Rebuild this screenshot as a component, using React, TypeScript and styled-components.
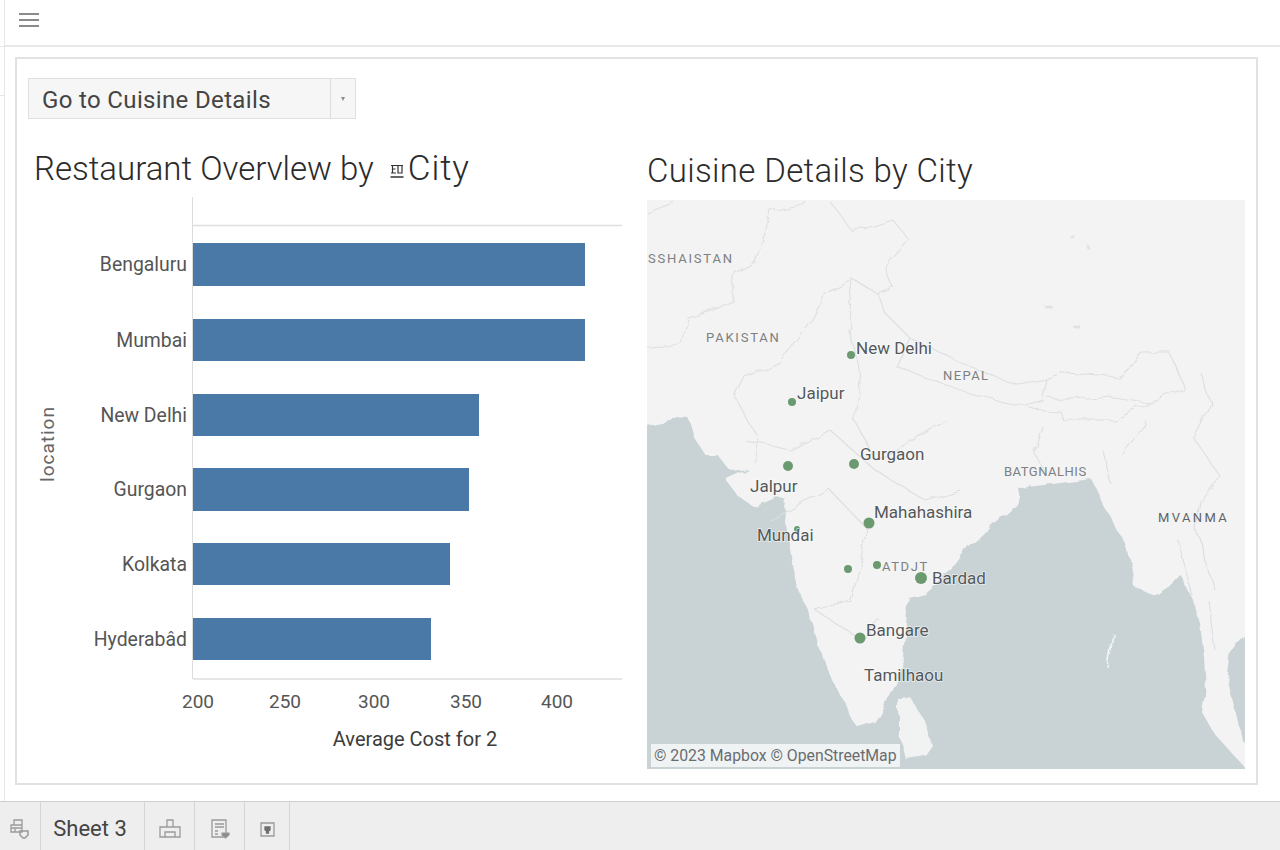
import React from 'react';
import styled, { createGlobalStyle } from 'styled-components';

const GlobalStyle = createGlobalStyle`
  html, body {
    margin: 0;
    padding: 0;
    background: #fff;
    font-family: Roboto, "Liberation Sans", sans-serif;
  }
`;

const Page = styled.div`
  width: 1280px;
  height: 850px;
  display: flex;
  flex-direction: column;
  overflow: hidden;
`;

const Workspace = styled.div`
  flex: 1;
  display: flex;
  min-height: 0;
`;

const Rail = styled.div`
  width: 4px;
  border-right: 1px solid #e6e6e6;
  display: flex;
  flex-direction: column;
`;

const RailCell = styled.div<{ $height: number }>`
  height: ${(p) => p.$height}px;
  border-bottom: 1px solid #e6e6e6;
`;

const Main = styled.div`
  flex: 1;
  display: flex;
  flex-direction: column;
`;

const TopBar = styled.div`
  height: 45px;
  border-bottom: 2px solid #e8e8e8;
  box-sizing: content-box;
  display: flex;
  align-items: center;
  padding-left: 14px;
`;

const Burger = styled.div`
  width: 20px;
  height: 14px;
  margin-bottom: 6px;
  display: flex;
  flex-direction: column;
  justify-content: space-between;

  span {
    height: 2px;
    background: #8a8a8a;
  }
`;

const Panel = styled.div`
  margin: 10px 22px 16px 10px;
  flex: 1;
  border: 2px solid #e2e2e2;
  padding: 19px 11px 14px;
  display: flex;
  flex-direction: column;
  min-height: 0;
`;

const Select = styled.div`
  width: 328px;
  height: 41px;
  box-sizing: border-box;
  border: 1px solid #e0e0e0;
  background: #f6f6f6;
  display: flex;
  flex-shrink: 0;
`;

const SelectLabel = styled.div`
  flex: 1;
  display: flex;
  align-items: center;
  padding: 2px 0 0 13px;
  font-size: 24px;
  letter-spacing: 0.35px;
  color: #444;
`;

const SelectArrow = styled.div`
  width: 24px;
  border-left: 1px solid #dcdcdc;
  display: flex;
  align-items: center;
  justify-content: center;

  &::after {
    content: '';
    border-left: 2.5px solid transparent;
    border-right: 2.5px solid transparent;
    border-top: 4px solid #8c8c8c;
  }
`;

const Columns = styled.div`
  flex: 1;
  display: grid;
  grid-template-columns: 619px 598px;
  min-height: 0;
`;

const Column = styled.div`
  display: flex;
  flex-direction: column;
  min-height: 0;
`;

const Title = styled.h2<{ $height: number; $indent: number; $top: number; $spacing: number }>`
  margin: 0;
  height: ${(p) => p.$height}px;
  padding-left: ${(p) => p.$indent}px;
  padding-top: ${(p) => p.$top}px;
  box-sizing: border-box;
  font-size: 33px;
  line-height: 44px;
  font-weight: 300;
  letter-spacing: ${(p) => p.$spacing}px;
  color: #2b2b2b;
  display: flex;
  align-items: flex-start;
  flex-shrink: 0;
  white-space: pre;
`;

const TitleCity = styled.span`
  font-size: 35px;
  letter-spacing: 0.9px;
`;

const TitleGlyph = styled.svg`
  width: 14px;
  height: 17px;
  margin: 15px 4px 0 16px;
`;

const ChartSvg = styled.svg`
  display: block;
  width: 619px;
  height: 574px;
  font-family: Roboto, "Liberation Sans", sans-serif;
`;

const CategoryLabel = styled.text`
  font-size: 19.4px;
  fill: #555;
  text-anchor: end;
`;

const TickLabel = styled.text`
  font-size: 19px;
  fill: #555;
  text-anchor: middle;
`;

const AxisTitle = styled.text<{ $dark?: boolean }>`
  font-size: ${(p) => (p.$dark ? 20 : 19)}px;
  letter-spacing: ${(p) => (p.$dark ? 0 : 1)}px;
  fill: ${(p) => (p.$dark ? '#3c3c3c' : '#666')};
  text-anchor: middle;
`;

const MapFrame = styled.div`
  position: relative;
  width: 598px;
  height: 569px;
  overflow: hidden;
`;

const MapSvg = styled.svg`
  display: block;
  width: 598px;
  height: 569px;
  font-family: Roboto, "Liberation Sans", sans-serif;
`;

const CityLabel = styled.text`
  font-size: 17px;
  fill: #54585a;
  paint-order: stroke;
  stroke: rgba(255, 255, 255, 0.65);
  stroke-width: 1.5px;
`;

const CountryLabel = styled.text<{ $spacing?: number; $fill?: string }>`
  font-size: 13px;
  fill: ${(p) => p.$fill ?? '#7c8082'};
  letter-spacing: ${(p) => p.$spacing ?? 1}px;
`;

const Attribution = styled.div`
  position: absolute;
  left: 4px;
  bottom: 2px;
  height: 23px;
  padding: 0 3px;
  display: flex;
  align-items: center;
  background: rgba(255, 255, 255, 0.72);
  font-size: 15.8px;
  color: #6a6d6f;
  white-space: nowrap;
`;

const Footer = styled.div`
  height: 49px;
  flex-shrink: 0;
  box-sizing: border-box;
  background: #eeeeee;
  border-top: 1px solid #cfcfcf;
  display: flex;
`;

const FooterCell = styled.div<{ $width: number }>`
  width: ${(p) => p.$width}px;
  box-sizing: border-box;
  border-right: 1px solid #d5d5d5;
  padding-top: 5px;
  display: flex;
  align-items: center;
  justify-content: center;
  font-size: 22px;
  color: #444;
`;

const SheetTab = styled(FooterCell)`
  padding-right: 5px;
`;

const FooterIcon = styled.svg`
  width: 24px;
  height: 24px;
  fill: none;
  stroke: #9a9a9a;
  stroke-width: 1.3;
`;

const bars = [
  { city: 'Bengaluru', top: 243, height: 43, end: 585 },
  { city: 'Mumbai', top: 319, height: 42, end: 585 },
  { city: 'New Delhi', top: 394, height: 42, end: 479 },
  { city: 'Gurgaon', top: 468, height: 43, end: 469 },
  { city: 'Kolkata', top: 543, height: 42, end: 450 },
  { city: 'Hyderabâd', top: 618, height: 42, end: 431 },
];

const ticks = [
  { label: '200', x: 198 },
  { label: '250', x: 285 },
  { label: '300', x: 374 },
  { label: '350', x: 466 },
  { label: '400', x: 557 },
];

// land outline runs past the map edge so the wobble filter never shows water at the frame
const LAND =
  'M635,185 H1260 V628 L1245,633 1229,651 1225,680 1235,720 1245,745 1260,752 V780 L1245,766 1215,733 1203,712 1207,690 1205,657 1201,623 1193,597 1181,573 1168,586 1154,595 1136,587 1132,565 1126,543 1106,507 1092,478 1060,482 1019,487 1015,503 988,527 968,547 952,570 925,593 909,597 906,613 901,667 889,693 873,720 857,725 842,697 822,653 810,613 798,587 792,560 786,523 788,500 778,497 755,507 740,497 727,480 755,467 731,470 717,453 705,453 695,437 689,416 647,425 635,427 Z';

const BORDERS = [
  'M647,213 L675,202',
  'M806,202 L770,210 766,230 755,262 735,273 731,300 711,310 687,317 681,345 647,347',
  'M826,293 L810,323 798,340 778,363 745,377 735,397 747,420 759,437 755,463',
  'M830,202 L853,232 893,220 909,240 885,267 893,287 877,293 853,280 826,293',
  'M877,293 L885,313 909,337 948,357 996,377 1019,385 1047,380 1043,397',
  'M909,337 L895,365 948,387 1019,407 1043,400',
  'M1047,397 L1075,400 1114,397 1150,403 1185,390 1170,353 1142,353 1118,377 1067,372 1047,380',
  'M1029,408 L1059,410 1063,420 1114,420 1150,403',
  'M1043,427 L1035,453 1043,470',
  'M1102,450 L1110,483 M1122,453 L1146,420',
  'M1201,373 L1211,403 1193,437 1221,477 1200,500 1196,530 1215,590',
  'M853,280 L848,330 860,370 855,420 875,460 945,420',
  'M745,440 L790,450 830,430 875,470 925,500 960,490',
  'M770,520 L830,490 868,530 850,600 815,610 862,640 880,620',
  'M1179,540 L1193,597 M1208,600 L1215,650',
];

const lakes = [
  { x: 1049, y: 307, rx: 4, ry: 1.5 },
  { x: 1076, y: 326, rx: 4, ry: 1.5 },
  { x: 1072, y: 236, rx: 3, ry: 1 },
  { x: 1087, y: 246, rx: 2, ry: 1.5 },
];

const pins = [
  { x: 851, y: 355, r: 4 },
  { x: 792, y: 402, r: 4 },
  { x: 788, y: 466, r: 5 },
  { x: 854, y: 464, r: 5 },
  { x: 797, y: 529, r: 3 },
  { x: 869, y: 523, r: 5.5 },
  { x: 848, y: 569, r: 4 },
  { x: 877, y: 565, r: 4 },
  { x: 921, y: 578, r: 6 },
  { x: 860, y: 638, r: 5.5 },
];

const cities = [
  { name: 'New Delhi', x: 856, y: 354 },
  { name: 'Jaipur', x: 797, y: 399 },
  { name: 'Gurgaon', x: 860, y: 460 },
  { name: 'Jalpur', x: 750, y: 492 },
  { name: 'Mahahashira', x: 874, y: 518 },
  { name: 'Mundai', x: 757, y: 541 },
  { name: 'Bardad', x: 932, y: 584 },
  { name: 'Bangare', x: 866, y: 636 },
  { name: 'Tamilhaou', x: 864, y: 681 },
];

const countries = [
  { name: 'SSHAISTAN', x: 648, y: 263, spacing: 1.8 },
  { name: 'PAKISTAN', x: 706, y: 342, spacing: 1.8 },
  { name: 'NEPAL', x: 943, y: 380, spacing: 1.4 },
  { name: 'BATGNALHIS', x: 1004, y: 476, spacing: 0.5 },
  { name: 'ATDJT', x: 882, y: 571, spacing: 1.6 },
  { name: 'MVANMA', x: 1158, y: 522, spacing: 2.4, fill: '#5f6365' },
];

export default function App() {
  return (
    <Page>
      <GlobalStyle />
      <Workspace>
        <Rail>
          <RailCell $height={46} />
          <RailCell $height={48} />
        </Rail>
        <Main>
          <TopBar>
            <Burger>
              <span />
              <span />
              <span />
            </Burger>
          </TopBar>
          <Panel>
            <Select>
              <SelectLabel>Go to Cuisine Details</SelectLabel>
              <SelectArrow />
            </Select>
            <Columns>
              <Column>
                <Title $height={76} $indent={6} $top={28} $spacing={0}>
                  Restaurant Overvlew by
                  <TitleGlyph viewBox="0 0 14 17" fill="none" stroke="#333">
                    <path d="M1 3.5h12M2.5 3.5v7.5M1 11h5M2.5 7h3M8 3.5v7.5h4V3.5" strokeWidth="1.2" />
                    <path d="M0.5 15h13" strokeWidth="1.5" />
                  </TitleGlyph>
                  <TitleCity>City</TitleCity>
                </Title>
                <ChartSvg viewBox="28 195 619 574">
                  <line x1="192.5" y1="197" x2="192.5" y2="679" stroke="#dcdcdc" />
                  <line x1="193" y1="225.5" x2="622" y2="225.5" stroke="#dedede" strokeWidth="1.5" />
                  <line x1="193" y1="679" x2="622" y2="679" stroke="#dedede" strokeWidth="1.5" />
                  {bars.map((bar) => (
                    <React.Fragment key={bar.city}>
                      <rect x="193" y={bar.top} width={bar.end - 193} height={bar.height} fill="#4a79a8" />
                      <CategoryLabel x="187" y={bar.top + bar.height / 2 + 6.5}>
                        {bar.city}
                      </CategoryLabel>
                    </React.Fragment>
                  ))}
                  {ticks.map((tick) => (
                    <TickLabel key={tick.label} x={tick.x} y="708">
                      {tick.label}
                    </TickLabel>
                  ))}
                  <AxisTitle $dark x="415" y="746">
                    Average Cost for 2
                  </AxisTitle>
                  <AxisTitle transform="translate(54 444) rotate(-90)">location</AxisTitle>
                </ChartSvg>
              </Column>
              <Column>
                <Title $height={81} $indent={0} $top={30} $spacing={0.35}>
                  Cuisine Details by City
                </Title>
                <MapFrame>
                  <MapSvg viewBox="647 200 598 569">
                    <defs>
                      <filter id="wobble" x="620" y="170" width="660" height="630" filterUnits="userSpaceOnUse">
                        <feTurbulence type="fractalNoise" baseFrequency="0.045" numOctaves="3" seed="7" />
                        <feDisplacementMap in="SourceGraphic" scale="9" />
                        <feGaussianBlur stdDeviation="0.5" />
                      </filter>
                    </defs>
                    <rect x="647" y="200" width="598" height="569" fill="#c9d3d6" />
                    <g filter="url(#wobble)">
                      <path d={LAND} fill="#f3f3f3" stroke="#f3f3f3" strokeLinejoin="round" strokeWidth="2" />
                      <path d="M899,700 L910,697 924,720 932,745 925,755 905,758 899,735 Z" fill="#f1f2f2" />
                      <path d="M1113,633 L1110,655 1108,668 1111,650 Z" fill="#f3f3f3" stroke="#f3f3f3" strokeWidth="1.5" />
                      {BORDERS.map((d) => (
                        <path key={d} d={d} fill="none" stroke="#dcdfe0" strokeWidth="1.1" strokeLinejoin="round" />
                      ))}
                      {lakes.map((lake) => (
                        <ellipse key={lake.x} cx={lake.x} cy={lake.y} rx={lake.rx} ry={lake.ry} fill="#dde2e3" />
                      ))}
                    </g>
                    {pins.map((pin) => (
                      <circle key={`${pin.x}-${pin.y}`} cx={pin.x} cy={pin.y} r={pin.r} fill="#6b9a70" />
                    ))}
                    {countries.map((c) => (
                      <CountryLabel key={c.name} x={c.x} y={c.y} $spacing={c.spacing} $fill={c.fill}>
                        {c.name}
                      </CountryLabel>
                    ))}
                    {cities.map((c) => (
                      <CityLabel key={c.name} x={c.x} y={c.y}>
                        {c.name}
                      </CityLabel>
                    ))}
                  </MapSvg>
                  <Attribution>© 2023 Mapbox © OpenStreetMap</Attribution>
                </MapFrame>
              </Column>
            </Columns>
          </Panel>
        </Main>
      </Workspace>
      <Footer>
        <FooterCell $width={41}>
          <FooterIcon viewBox="0 0 24 24">
            <path d="M6 3h8v5H6zM3 8h11v7H3zM3 11h11M7 15v-4" />
            <path d="M12 14h8v4l-3 3h-2l-3-3z" strokeWidth="1.5" />
          </FooterIcon>
        </FooterCell>
        <SheetTab $width={104}>Sheet 3</SheetTab>
        <FooterCell $width={50}>
          <FooterIcon viewBox="0 0 24 24">
            <path d="M9 3h6v7H9zM2 10h20v10H2zM7 15h10v5H7z" />
          </FooterIcon>
        </FooterCell>
        <FooterCell $width={50}>
          <FooterIcon viewBox="0 0 24 24">
            <path d="M4 3h14v17H4zM7 7h9M7 10h9M7 14h3M7 17h3" />
            <path d="M14 16h7v2l-3.500 3-3.500-3z" fill="#8a8a8a" strokeWidth="1.200" />
          </FooterIcon>
        </FooterCell>
        <FooterCell $width={45}>
          <FooterIcon viewBox="0 0 24 24">
            <path d="M6 6h13v13H6z" />
            <path d="M10 10h5v3l-1.500 1v2h-2v-2L10 13z" fill="#6f6f6f" stroke="#6f6f6f" />
          </FooterIcon>
        </FooterCell>
      </Footer>
    </Page>
  );
}
